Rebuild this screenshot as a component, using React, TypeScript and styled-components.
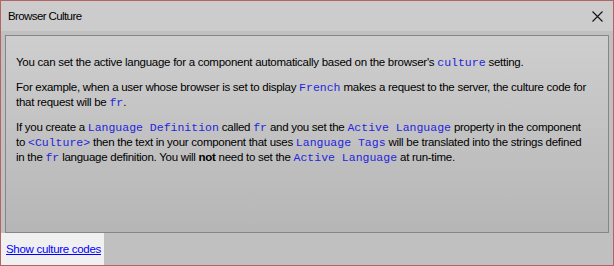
import styled, { createGlobalStyle } from 'styled-components'

const GlobalStyle = createGlobalStyle`
  html, body {
    margin: 0;
    padding: 0;
    background: #c0c0c0;
  }
`

function CloseIcon() {
  return (
    <svg width="11" height="11" viewBox="0 0 11 11">
      <path d="M0.5 0.5 L10.5 10.5 M10.5 0.5 L0.5 10.5" stroke="#111" strokeWidth="1.1" fill="none" />
    </svg>
  )
}

function App() {
  return (
    <>
      <GlobalStyle />
      <Window>
        <TitleBar>
          <Title>Browser Culture</Title>
          <CloseButton>
            <CloseIcon />
          </CloseButton>
        </TitleBar>
        <Body>
          <Panel>
            <Para>
              You can set the active language for a component automatically based on the browser's{' '}
              <Code>culture</Code> setting.
            </Para>
            <Para>
              For example, when a user whose browser is set to display <Code>French</Code> makes a request
              to the server, the culture code for that request will be <Code>fr</Code>.
            </Para>
            <Para>
              If you create a <Code>Language Definition</Code> called <Code>fr</Code> and you set the{' '}
              <Code>Active Language</Code> property in the component to <Code>&lt;Culture&gt;</Code> then
              the text in your component that uses <Code>Language Tags</Code> will be translated into the
              strings defined in the <Code>fr</Code> language definition. You will <strong>not</strong> need
              to set the <Code>Active Language</Code> at run-time.
            </Para>
          </Panel>
          <Footer>
            <LinkBox>
              <Link href="#">Show culture codes</Link>
            </LinkBox>
          </Footer>
        </Body>
      </Window>
    </>
  )
}

export default App

const Window = styled.div`
  width: 614px;
  height: 266px;
  box-sizing: border-box;
  border: 1px solid #b46464;
  display: flex;
  flex-direction: column;
  font-family: 'Liberation Sans', Arial, sans-serif;
  font-size: 11.5px;
  letter-spacing: -0.27px;
  color: #000;
`

const TitleBar = styled.div`
  height: 30px;
  background: #cccccc;
  display: flex;
  align-items: center;
  justify-content: space-between;
  padding: 0 10px 0 7px;
  flex-shrink: 0;
`

const Title = styled.div`
  font-size: 11.5px;
  letter-spacing: -0.6px;
  color: #000;
`

const CloseButton = styled.div`
  width: 11px;
  height: 11px;
  display: flex;
`

const Body = styled.div`
  flex: 1;
  display: flex;
  flex-direction: column;
  background: #c0c0c0;
  padding-top: 4px;
`

const Panel = styled.div`
  margin: 0 4px;
  height: 198px;
  flex-shrink: 0;
  box-sizing: border-box;
  border: 1px solid #868686;
  background: linear-gradient(to bottom, #cecece, #b6b6b6);
  padding: 19px 17px 0 10px;
  display: flex;
  flex-direction: column;
  gap: 10px;
`

const Para = styled.p`
  margin: 0;
  line-height: 14px;
`

const Code = styled.code`
  font-family: 'Liberation Mono', 'Courier New', monospace;
  font-size: 11.5px;
  letter-spacing: 0;
  color: #2525dd;
`

const Footer = styled.div`
  flex: 1;
  display: flex;
`

const LinkBox = styled.div`
  width: 103px;
  background: #f0f0f0;
  display: flex;
  align-items: center;
  padding-left: 5px;
  box-sizing: border-box;
  white-space: nowrap;
`

const Link = styled.a`
  color: #0000ff;
  text-decoration: underline;
  font-size: 11.5px;
  letter-spacing: -0.3px;
`
